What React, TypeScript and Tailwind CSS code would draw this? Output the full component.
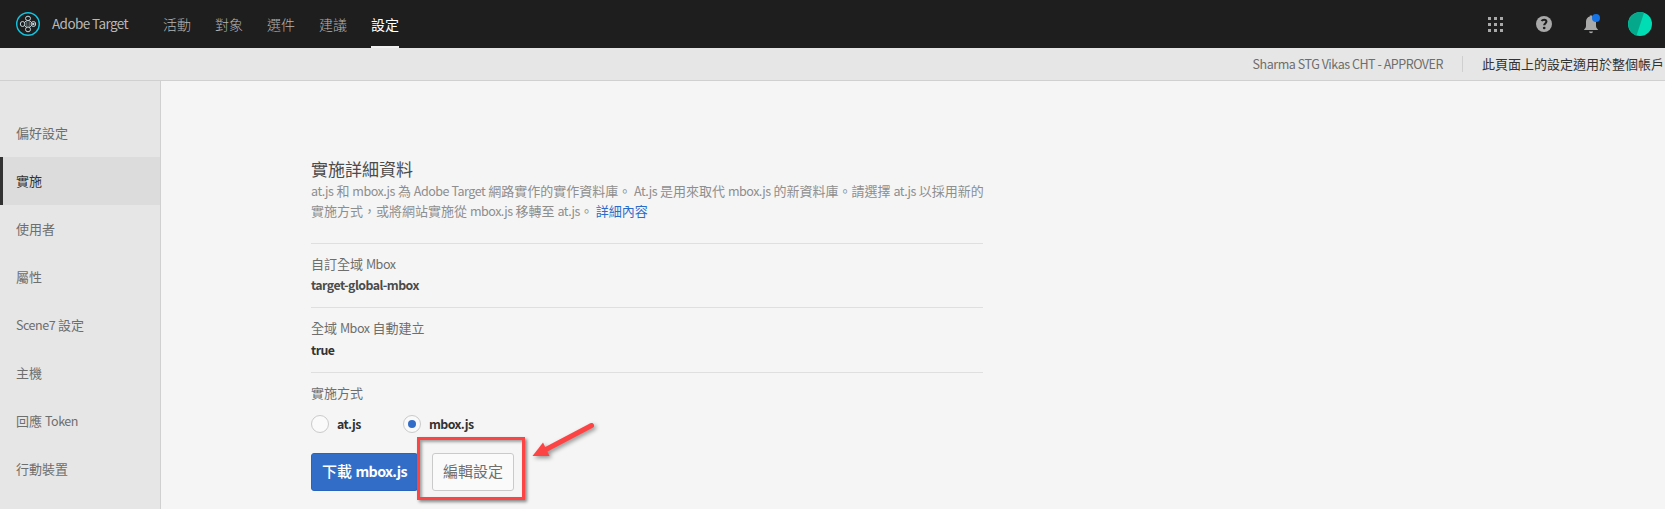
import React from "react";

const navItems = ["活動", "對象", "選件", "建議"];

const sideItems = ["偏好設定", "實施", "使用者", "屬性", "Scene7 設定", "主機", "回應 Token", "行動裝置"];

const latinRun = /([\x21-\x7e]+(?: [\x21-\x7e]+)*)/;

/** Sets Latin runs slightly tighter than the surrounding Chinese text. */
function Mixed({ text, bold = false }: { text: string; bold?: boolean }) {
  return (
    <span className="whitespace-pre">
      {text.split(latinRun).map((part, i) =>
        i % 2 === 1 ? (
          <span key={i} className={bold ? "text-[0.95em] tracking-[-0.044em]" : "text-[0.965em] tracking-[-0.038em]"}>
            {part}
          </span>
        ) : (
          part
        ),
      )}
    </span>
  );
}

function Logo() {
  return (
    <svg className="h-6 w-6" viewBox="0 0 24 24" fill="none">
      <circle cx="12" cy="12" r="11.3" stroke="#12c4e0" strokeWidth="1.4" />
      <path d="M10.800 9v6M13.200 9v6" stroke="#7d8b90" strokeWidth="0.900" />
      <g stroke="#c3d8de" strokeWidth="1">
        <ellipse cx="12" cy="6.400" rx="2.500" ry="2.200" />
        <ellipse cx="12" cy="17.400" rx="2.500" ry="2.400" />
        <ellipse cx="6.600" cy="12" rx="2.300" ry="2.500" />
        <ellipse cx="17.400" cy="12" rx="2.300" ry="2.500" />
        <path d="M8.500 10.500l2-1.800M8.500 13.500l2 1.800M15.500 10.500l-2-1.800M15.500 13.500l-2 1.800" />
      </g>
      <circle cx="17.300" cy="12" r="1.200" fill="#c3d8de" />
    </svg>
  );
}

function AppGrid() {
  return (
    <svg className="h-[15px] w-[15px]" viewBox="0 0 15 15" fill="#a9a9a9" shapeRendering="crispEdges">
      {[0, 6, 12].map((y) => [0, 6, 12].map((x) => <rect key={`${x}-${y}`} x={x} y={y} width="3" height="3" />))}
    </svg>
  );
}

function HelpIcon() {
  return (
    <svg className="h-4 w-4" viewBox="0 0 16 16">
      <circle cx="8" cy="8" r="8" fill="#a9a9a9" />
      <path d="M5.500 5C6.200 4 7 3.700 8.100 3.700c1.500 0 2.300.8 2.300 1.900 0 1.800-2.200 1.900-2.200 3.700" fill="none" stroke="#1e1e1e" strokeWidth="2.100" />
      <circle cx="8.200" cy="12" r="1.350" fill="#1e1e1e" />
    </svg>
  );
}

function BellIcon() {
  return (
    <svg className="h-[20px] w-[18px]" viewBox="0 0 18 20">
      <path d="M1 16c0-1.200 2-1.600 2-4V7.500C3 4.800 4.700 3 6.800 2.500V1.600h2.400v.9C11.400 3 13 4.800 13 7.500V12c0 2.400 2 2.800 2 4z" fill="#a9a9a9" />
      <path d="M6 17.500h4c-.2 1-1 1.700-2 1.700s-1.800-.7-2-1.700z" fill="#a9a9a9" />
      <circle cx="13" cy="4" r="4" fill="#1473e6" />
    </svg>
  );
}

function Rule() {
  return <div className="h-px bg-[#dfdfdf]" />;
}

export default function App() {
  return (
    <div className="flex h-[509px] w-[1665px] flex-col overflow-hidden bg-[#f5f5f5] font-['Noto_Sans_CJK_TC',sans-serif] text-[13px] leading-5 text-[#6e6e6e]">
      <header className="flex h-12 shrink-0 items-center bg-[#1e1e1e] pl-4 text-sm">
        <Logo />
        <span className="ml-3 w-[111px] text-[13.5px] tracking-[-0.600px] whitespace-nowrap text-[#b8b8b8]">Adobe Target</span>
        <nav className="flex h-full gap-6 text-[#b4b4b4]">
          {navItems.map((item) => (
            <a key={item} className="flex h-full items-center font-light">{item}</a>
          ))}
          <a className="flex h-full items-center border-b-2 border-[#f0f0f0] pt-0.5 text-white">設定</a>
        </nav>
        <div className="ml-auto flex items-center pr-[13px]">
          <AppGrid />
          <div className="ml-[33px]"><HelpIcon /></div>
          <div className="ml-[31px]"><BellIcon /></div>
          <svg className="ml-[27px] h-6 w-6" viewBox="0 0 24 24">
            <circle cx="12" cy="12" r="12" fill="#00dcb3" />
            <path d="M16 .7A12 12 0 1 0 8.500 23.500z" fill="#05a88a" />
          </svg>
        </div>
      </header>

      <div className="flex h-[33px] shrink-0 items-center justify-end border-b border-[#d0d0d0] bg-[#e6e6e6] whitespace-nowrap">
        <Mixed text="Sharma STG Vikas CHT - APPROVER" />
        <span className="ml-[19px] h-4 w-px bg-[#cfcfcf]" />
        <span className="ml-[19px] mr-px text-[#323232]">此頁面上的設定適用於整個帳戶</span>
      </div>

      <div className="flex min-h-0 flex-1">
        <aside className="w-[161px] shrink-0 border-r border-[#d0d0d0] bg-[#e6e6e6] pt-7">
          {sideItems.map((item, i) => (
            <div
              key={item}
              className={
                i === 1
                  ? "flex h-12 items-center border-l-3 border-[#323232] bg-[#dcdcdc] pl-[13px] text-[#323232]"
                  : "flex h-12 items-center pl-4"
              }
            >
              <Mixed text={item} />
            </div>
          ))}
        </aside>

        <main className="ml-[150px] w-[672px] whitespace-nowrap pt-[76px]">
          <h1 className="h-[24px] text-[17px] leading-[24px] text-[#4b4b4b]">實施詳細資料</h1>
          <p className="h-[62px] text-[#8e8e8e]">
            <span className="block h-5"><Mixed text="at.js 和 mbox.js 為 Adobe Target 網路實作的實作資料庫。 At.js 是用來取代 mbox.js 的新資料庫。請選擇 at.js 以採用新的" /></span>
            <span className="block h-5"><Mixed text="實施方式，或將網站實施從 mbox.js 移轉至 at.js。 " /><a className="text-[#2c6cc8]">詳細內容</a></span>
          </p>
          <Rule />
          <div className="h-[63px] pt-[10px]">
            <div className="h-5"><Mixed text="自訂全域 Mbox" /></div>
            <div className="mt-px h-5 font-bold text-[#4b4b4b]"><Mixed bold text="target-global-mbox" /></div>
          </div>
          <Rule />
          <div className="h-[64px] pt-[10px]">
            <div className="h-5"><Mixed text="全域 Mbox 自動建立" /></div>
            <div className="mt-0.5 h-5 font-bold text-[#323232]"><Mixed bold text="true" /></div>
          </div>
          <Rule />
          <div className="pt-[10px]">實施方式</div>
          <div className="mt-[11px] flex h-5 items-center text-[#323232]">
            <span className="h-[18px] w-[18px] rounded-full border border-[#cacaca] bg-[#fafafa]" />
            <span className="ml-2 w-[66px] font-bold"><Mixed bold text="at.js" /></span>
            <span className="flex h-[18px] w-[18px] items-center justify-center rounded-full border border-[#cacaca] bg-[#fafafa]">
              <span className="h-2 w-2 rounded-full bg-[#326ec8]" />
            </span>
            <span className="ml-2 font-bold"><Mixed bold text="mbox.js" /></span>
          </div>
          <div className="relative mt-[19px] flex text-[15px]">
            <button className="flex h-[38px] w-[107px] items-center justify-center rounded-[3px] border border-[#2864be] bg-[#326ec8] pb-0.5 font-bold text-white"><span className="font-medium">下載&nbsp;</span><Mixed bold text="mbox.js" /></button>
            <button className="ml-[14px] flex h-[38px] w-[82px] items-center justify-center rounded-[3px] border border-[#cacaca] bg-[#fafafa] pb-0.5 text-[#6e6e6e]">編輯設定</button>
            <div className="absolute left-[106px] top-[-16px] h-[63px] w-[108px] border-3 border-[#fc4444] shadow-[2px_2px_3px_rgba(0,0,0,0.45),inset_2px_2px_3px_rgba(0,0,0,0.35)]" />
            <svg className="absolute left-[212px] top-[-38px] h-[52px] w-[80px] drop-shadow-[2px_2px_2px_rgba(0,0,0,0.4)]" viewBox="0 0 80 52">
              <path d="M68.500 10.500L22 35" stroke="#fc4444" strokeWidth="5" strokeLinecap="round" />
              <path d="M9.500 41L20 27.500L26.500 41z" fill="#fc4444" />
            </svg>
          </div>
        </main>
      </div>
    </div>
  );
}
